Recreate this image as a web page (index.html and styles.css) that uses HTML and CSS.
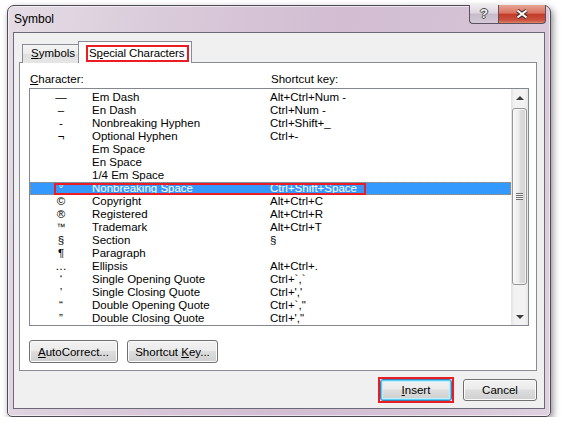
FILE: index.html
```html
<!DOCTYPE html>
<html lang="en">
<head>
    <meta charset="UTF-8">
    <title>Symbol</title>
    <link rel="stylesheet" href="styles.css">
</head>
<body>
    <div class="window">
        <div class="titlebar">
            <span class="title">Symbol</span>
            <div class="caption">
                <span class="cap-btn help">?</span>
                <span class="cap-btn close">
                    <svg width="14" height="10" viewBox="0 0 14 10">
                        <path d="M2.5 1.5 L11.5 8.5 M11.5 1.5 L2.5 8.5" stroke="#3a2626" stroke-width="4" fill="none"/>
                        <path d="M2.5 1.5 L11.5 8.5 M11.5 1.5 L2.5 8.5" stroke="#fff" stroke-width="2.2" fill="none"/>
                    </svg>
                </span>
            </div>
        </div>

        <div class="client">
            <div class="tabs">
                <div class="tab"><u>S</u>ymbols</div>
                <div class="tab active"><span class="mark">S<u>p</u>ecial Characters</span></div>
            </div>

            <div class="panel">
                <div class="headings">
                    <span class="h-char"><u>C</u>haracter:</span>
                    <span class="h-key">Shortcut key:</span>
                </div>

                <div class="listbox">
                    <div class="rows">
                        <div class="row"><span class="sym">—</span><span class="name">Em Dash</span><span class="key">Alt+Ctrl+Num -</span></div>
                        <div class="row"><span class="sym">–</span><span class="name">En Dash</span><span class="key">Ctrl+Num -</span></div>
                        <div class="row"><span class="sym">-</span><span class="name">Nonbreaking Hyphen</span><span class="key">Ctrl+Shift+_</span></div>
                        <div class="row"><span class="sym">¬</span><span class="name">Optional Hyphen</span><span class="key">Ctrl+-</span></div>
                        <div class="row"><span class="sym"></span><span class="name">Em Space</span><span class="key"></span></div>
                        <div class="row"><span class="sym"></span><span class="name">En Space</span><span class="key"></span></div>
                        <div class="row"><span class="sym"></span><span class="name">1/4 Em Space</span><span class="key"></span></div>
                        <div class="row selected"><span class="sym">°</span><span class="name">Nonbreaking Space</span><span class="key">Ctrl+Shift+Space</span><span class="callout"></span></div>
                        <div class="row"><span class="sym">©</span><span class="name">Copyright</span><span class="key">Alt+Ctrl+C</span></div>
                        <div class="row"><span class="sym">®</span><span class="name">Registered</span><span class="key">Alt+Ctrl+R</span></div>
                        <div class="row"><span class="sym tm">™</span><span class="name">Trademark</span><span class="key">Alt+Ctrl+T</span></div>
                        <div class="row"><span class="sym">§</span><span class="name">Section</span><span class="key">§</span></div>
                        <div class="row"><span class="sym">¶</span><span class="name">Paragraph</span><span class="key"></span></div>
                        <div class="row"><span class="sym">…</span><span class="name">Ellipsis</span><span class="key">Alt+Ctrl+.</span></div>
                        <div class="row"><span class="sym">‘</span><span class="name">Single Opening Quote</span><span class="key">Ctrl+`,`</span></div>
                        <div class="row"><span class="sym">’</span><span class="name">Single Closing Quote</span><span class="key">Ctrl+','</span></div>
                        <div class="row"><span class="sym">“</span><span class="name">Double Opening Quote</span><span class="key">Ctrl+`,"</span></div>
                        <div class="row"><span class="sym">”</span><span class="name">Double Closing Quote</span><span class="key">Ctrl+',"</span></div>
                    </div>
                    <div class="scrollbar">
                        <div class="sb-arrow up"></div>
                        <div class="sb-track">
                            <div class="thumb"><span class="grip"></span></div>
                        </div>
                        <div class="sb-arrow down"></div>
                    </div>
                </div>

                <div class="panel-btns">
                    <button class="btn autocorrect"><u>A</u>utoCorrect...</button>
                    <button class="btn shortcut">Shortcut <u>K</u>ey...</button>
                </div>
            </div>

            <div class="dialog-btns">
                <span class="red-box"><button class="btn default insert"><u>I</u>nsert</button></span>
                <button class="btn cancel">Cancel</button>
            </div>
        </div>
    </div>
</body>
</html>
```

FILE: styles.css
```css
body {
    margin: 0;
    background: #fff;
    font-family: "Liberation Sans", Arial, sans-serif;
    font-size: 11.5px;
    color: #000;
}

u {
    text-underline-offset: 1px;
}

.window {
    margin: 5px 0 0 7px;
    width: 544px;
    height: 412px;
    box-sizing: border-box;
    padding: 0 5px 7px;
    border: 1px solid #4e4a56;
    border-radius: 7px 7px 5px 5px;
    background: linear-gradient(100deg, #e4dce4 0%, #dacbda 25%, #d2bdd2 55%, #d6c3d6 80%, #dfd2df 100%);
    box-shadow: inset 0 0 0 1px rgba(255,255,255,0.55), 2px 3px 7px rgba(0,0,0,0.45);
}

.titlebar {
    height: 26px;
    display: flex;
    justify-content: space-between;
    align-items: flex-start;
}

.title {
    padding: 5px 0 0 1px;
    line-height: 16px;
    font-size: 12px;
}

.caption {
    display: flex;
    margin: -1px -1px 0 0;
}

.cap-btn {
    height: 19px;
    box-sizing: border-box;
    border: 1px solid #5d5262;
    border-top: none;
    display: flex;
    align-items: center;
    justify-content: center;
}

.help {
    width: 29px;
    border-right: none;
    border-radius: 0 0 0 4px;
    background: linear-gradient(#efeaf0, #ddd5df 45%, #c7bbca 50%, #d4c9d6);
    color: #f2f2f2;
    font-weight: bold;
    font-size: 13px;
    line-height: 16px;
    text-shadow: 1px 0 #4a4a4a, -1px 0 #4a4a4a, 0 1px #4a4a4a, 0 -1px #4a4a4a;
}

.close {
    width: 48px;
    border-radius: 0 0 4px 0;
    background: linear-gradient(#e9a596, #d9735f 45%, #c23b28 52%, #cc5340 85%, #dd8468);
}

.client {
    height: 377px;
    box-sizing: border-box;
    border: 1px solid #6d6878;
    background: #f0f0f0;
    padding: 8px 7px 7px 5px;
}

.tabs {
    display: flex;
    align-items: flex-end;
    height: 22px;
    margin-bottom: -1px;
    padding-left: 3px;
    white-space: nowrap;
}

.tab {
    width: 57px;
    height: 19px;
    box-sizing: border-box;
    border: 1px solid #898c95;
    border-bottom: none;
    padding-left: 8px;
    line-height: 17px;
    background: linear-gradient(#f4f4f4, #ececec 50%, #dfdfdf 50%, #e6e6e6);
}

.tab.active {
    position: relative;
    width: 114px;
    height: 22px;
    margin-left: -1px;
    padding: 3px 2px 0 7px;
    background: #fff;
}

.mark {
    display: block;
    height: 17px;
    box-sizing: border-box;
    border: 2px solid #ec1c24;
    padding-left: 1px;
    line-height: 13px;
    letter-spacing: -0.1px;
    overflow: hidden;
}

.panel {
    height: 309px;
    box-sizing: border-box;
    border: 1px solid #898c95;
    background: #fff;
    padding: 8px 7px 0 9px;
}

.headings {
    display: flex;
    height: 16px;
    line-height: 16px;
}

.h-char {
    width: 242px;
    box-sizing: border-box;
    padding-left: 1px;
}

.listbox {
    display: flex;
    height: 238px;
    box-sizing: border-box;
    margin-top: 1px;
    border: 1px solid #828790;
}

.rows {
    flex: 1;
    padding-top: 2px;
    overflow: hidden;
}

.row {
    position: relative;
    display: flex;
    height: 13px;
    line-height: 13px;
    white-space: nowrap;
}

.sym {
    width: 62px;
    text-align: center;
}

.sym.tm {
    font-size: 9px;
}

.name {
    width: 178px;
}

.row.selected {
    background: #3399ff;
    color: #fff;
    outline: 1px dotted #d08a3c;
    outline-offset: -1px;
}

.callout {
    position: absolute;
    left: 24px;
    top: 1px;
    width: 312px;
    height: 12px;
    box-sizing: border-box;
    border: 2px solid #ec1c24;
}

.scrollbar {
    width: 17px;
    display: flex;
    flex-direction: column;
    background: linear-gradient(90deg, #e2e2e2, #f2f2f2 20%, #f2f2f2 80%, #e6e6e6);
}

.sb-arrow {
    height: 17px;
    display: flex;
    align-items: center;
    justify-content: center;
}

.sb-arrow::before {
    content: "";
    border-left: 4px solid transparent;
    border-right: 4px solid transparent;
}

.sb-arrow.up::before {
    border-bottom: 4px solid #3c3c3c;
}

.sb-arrow.down::before {
    border-top: 4px solid #3c3c3c;
}

.sb-track {
    flex: 1;
    padding-top: 2px;
}

.thumb {
    height: 177px;
    margin: 0 1px;
    box-sizing: border-box;
    border: 1px solid #969696;
    border-radius: 3px;
    background: linear-gradient(90deg, #f6f6f6, #ececec 45%, #dcdcdc 55%, #d2d2d2);
    box-shadow: inset 0 0 0 1px rgba(255,255,255,0.7);
    display: flex;
    align-items: center;
    justify-content: center;
}

.grip {
    width: 7px;
    height: 7px;
    background: repeating-linear-gradient(#707070 0 1px, #f2f2f2 1px 2px);
}

.btn {
    height: 23px;
    box-sizing: border-box;
    padding: 0;
    border: 1px solid #707070;
    border-radius: 3px;
    background: linear-gradient(#f2f2f2 0%, #ebebeb 45%, #dddddd 50%, #cfcfcf 100%);
    box-shadow: inset 0 0 0 1px #fbfbfb;
    font: inherit;
    color: #000;
}

.panel-btns {
    display: flex;
    gap: 9px;
    margin-top: 14px;
}

.autocorrect {
    width: 89px;
}

.shortcut {
    width: 91px;
}

.dialog-btns {
    display: flex;
    justify-content: flex-end;
    align-items: center;
    gap: 9px;
    margin-top: 6px;
}

.dialog-btns .btn {
    height: 22px;
}

.red-box {
    display: flex;
    border: 2px solid #ec1c24;
}

.insert {
    width: 72px;
}

.cancel {
    width: 74px;
}

.btn.default {
    border-color: #3c7fb1;
    box-shadow: inset 0 0 0 1px #5ad0f7, inset 0 0 0 2px #c4ecfb;
}
```
